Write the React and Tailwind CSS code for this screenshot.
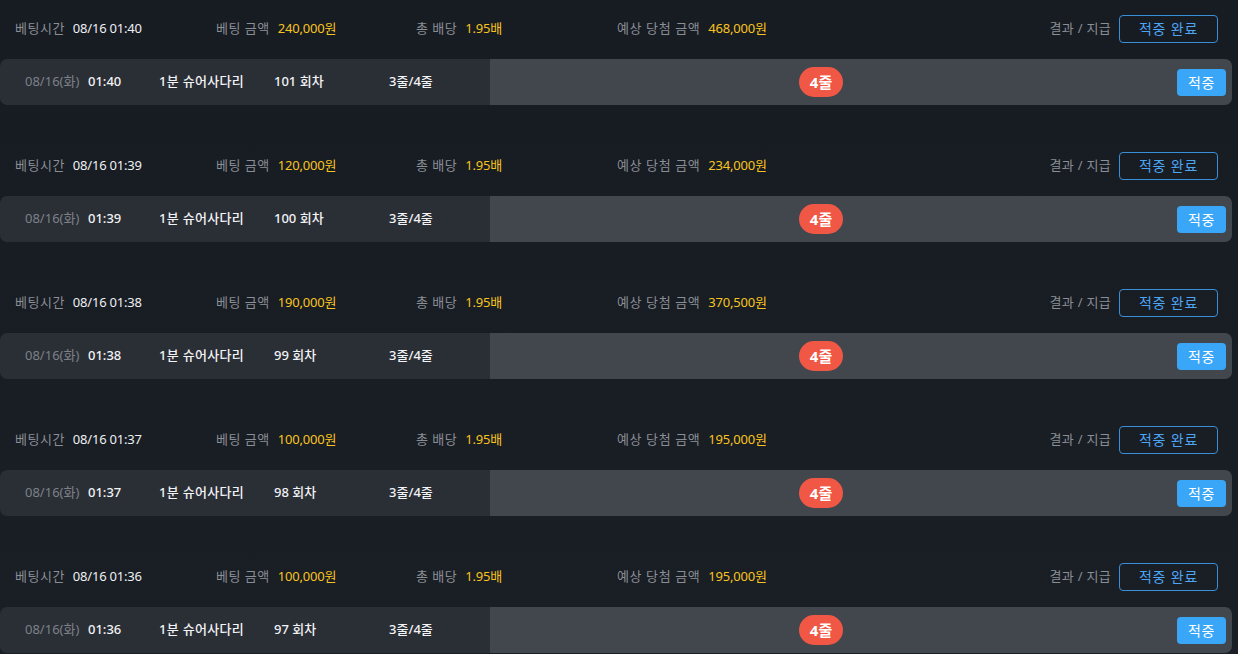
const bets = [
  { time: "01:40", amount: "240,000원", win: "468,000원", round: "101 회차" },
  { time: "01:39", amount: "120,000원", win: "234,000원", round: "100 회차" },
  { time: "01:38", amount: "190,000원", win: "370,500원", round: "99 회차" },
  { time: "01:37", amount: "100,000원", win: "195,000원", round: "98 회차" },
  { time: "01:36", amount: "100,000원", win: "195,000원", round: "97 회차" },
];

const BetBlock = ({ bet }) => (
  <div className="mb-[32px]">
    {/* header */}
    <div className="flex h-[57px] items-center pl-[15px] pr-[20px] text-[13px]">
      <div className="flex w-[201px] items-center gap-[8px]">
        <span className="tracking-[0.5px] text-[#8a8e95]">베팅시간</span>
        <span className="tracking-[-0.2px] text-[#eef0f2]">08/16 {bet.time}</span>
      </div>
      <div className="flex w-[200px] items-center gap-[8px]">
        <span className="tracking-[0.5px] text-[#8a8e95]">베팅 금액</span>
        <span className="tracking-[-0.2px] text-[#f7c41f]">{bet.amount}</span>
      </div>
      <div className="flex w-[201px] items-center gap-[8px]">
        <span className="tracking-[0.5px] text-[#8a8e95]">총 배당</span>
        <span className="tracking-[-0.2px] text-[#f7c41f]">1.95배</span>
      </div>
      <div className="flex items-center gap-[8px]">
        <span className="tracking-[0.6px] text-[#8a8e95]">예상 당첨 금액</span>
        <span className="tracking-[-0.2px] text-[#f7c41f]">{bet.win}</span>
      </div>
      <div className="ml-auto flex items-center gap-[8px]">
        <span className="tracking-[0.3px] text-[#8a8e95]">결과 / 지급</span>
        <button className="h-[28px] w-[99px] rounded-[4px] border border-[#3a8fd9] text-[14px] tracking-[0.8px] text-[#4ca6f5]">
          적중 완료
        </button>
      </div>
    </div>

    {/* detail row */}
    <div className="mt-[2px] mr-[6px] flex h-[46px] overflow-hidden rounded-[7px] text-[13px]">
      <div className="flex w-[490px] items-center bg-[#2a2e35] pl-[25px] font-medium">
        <span className="w-[63px] font-normal text-[#7d8189]">08/16(화)</span>
        <span className="w-[71px] text-[#f2f3f5]">{bet.time}</span>
        <span className="w-[115px] tracking-[0.3px] text-[#f2f3f5]">1분 슈어사다리</span>
        <span className="w-[115px] text-[#f2f3f5]">{bet.round}</span>
        <span className="text-[#f2f3f5]">3줄/4줄</span>
      </div>
      <div className="flex flex-1 items-center bg-[#42464d] pr-[6px]">
        <span className="ml-[309px] flex h-[30px] w-[44px] items-center justify-center rounded-full bg-[#f05845] text-[15px] font-bold text-white">
          4줄
        </span>
        <button className="ml-auto h-[27px] w-[49px] rounded-[4px] bg-[#3aa6f7] text-[14px] tracking-[0.5px] text-white">
          적중
        </button>
      </div>
    </div>
  </div>
);

const App = () => {
  return (
    <div
      className="h-[654px] w-[1238px] overflow-hidden bg-gradient-to-b from-[#171b22] to-[#1a1e25]"
      style={{ fontFamily: '"Noto Sans", "Noto Sans CJK KR", sans-serif' }}
    >
      {bets.map((bet) => (
        <BetBlock key={bet.time} bet={bet} />
      ))}
    </div>
  );
};

export default App;
